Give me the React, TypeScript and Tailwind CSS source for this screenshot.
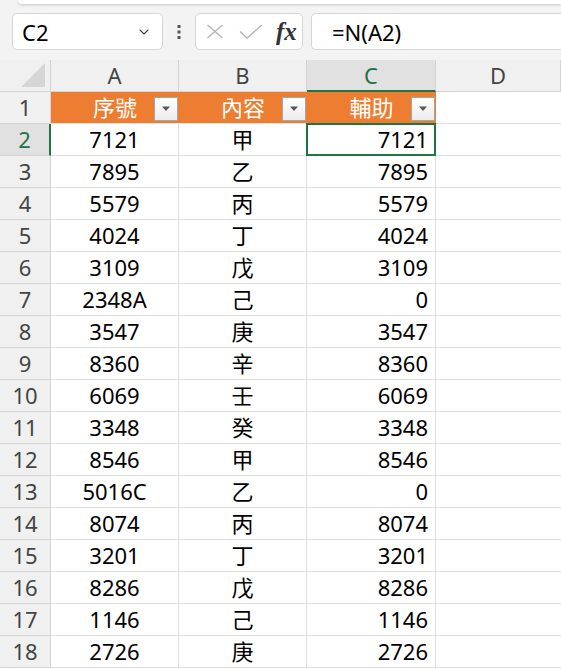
import React from 'react';
import { ChevronDown } from 'lucide-react';

const rows: [string, string, string][] = [
  ['7121', '甲', '7121'],
  ['7895', '乙', '7895'],
  ['5579', '丙', '5579'],
  ['4024', '丁', '4024'],
  ['3109', '戊', '3109'],
  ['2348A', '己', '0'],
  ['3547', '庚', '3547'],
  ['8360', '辛', '8360'],
  ['6069', '壬', '6069'],
  ['3348', '癸', '3348'],
  ['8546', '甲', '8546'],
  ['5016C', '乙', '0'],
  ['8074', '丙', '8074'],
  ['3201', '丁', '3201'],
  ['8286', '戊', '8286'],
  ['1146', '己', '1146'],
  ['2726', '庚', '2726'],
];

const font = { fontFamily: '"Noto Sans", "Noto Sans CJK TC", sans-serif' };

const FilterButton = () => (
  <div className="absolute right-[1px] top-[5px] w-[24px] h-[24px] bg-gradient-to-b from-white to-[#ececec] border border-[#a6a6a6] flex items-center justify-center">
    <svg width="10" height="6" viewBox="0 0 10 6">
      <path d="M1 0.5 L9 0.5 L5 5 Z" fill="#595959" />
    </svg>
  </div>
);

const FormulaBar = () => (
  <div className="h-[60px] bg-[#f3f3f3] relative">
    <div className="h-[4px] ml-[18px] bg-white rounded-bl-lg shadow-[0_1px_3px_rgba(0,0,0,0.18)]" />
    <div className="flex items-center mt-[9px] pl-[12px] h-[37px]">
      <div className="w-[151px] h-[37px] bg-white border border-[#d6d6d6] rounded-[5px] flex items-center justify-between pl-[9px] pr-[10px]">
        <span className="text-[22px] text-black leading-none">C2</span>
        <ChevronDown size={16} strokeWidth={1.6} className="text-[#444]" />
      </div>
      <div className="w-[32px] flex justify-center">
        <svg width="4" height="16" viewBox="0 0 4 16">
          <rect x="0.5" y="1" width="3" height="3" fill="#555" />
          <rect x="0.5" y="6.5" width="3" height="3" fill="#555" />
          <rect x="0.5" y="12" width="3" height="3" fill="#555" />
        </svg>
      </div>
      <div className="w-[108px] h-[37px] bg-white border border-[#d6d6d6] rounded-[5px] flex items-center pl-[10px]">
        <svg width="18" height="15" viewBox="0 0 18 15" className="mr-[15px]">
          <path d="M1.5 1 L16.5 14 M16.5 1 L1.5 14" stroke="#b5b5b5" strokeWidth="1.4" fill="none" />
        </svg>
        <svg width="24" height="15" viewBox="0 0 24 15" className="mr-[13px]">
          <path d="M1 7.5 L8 14 L23 1" stroke="#b5b5b5" strokeWidth="1.4" fill="none" />
        </svg>
        <span
          className="italic font-bold text-[25px] leading-none text-[#333]"
          style={{ fontFamily: '"Liberation Serif", serif' }}
        >
          fx
        </span>
      </div>
      <div className="flex-1 ml-[8px] h-[37px] bg-white border border-r-0 border-[#d6d6d6] rounded-l-[5px] flex items-center pl-[20px]">
        <span className="text-[22px] text-black leading-none">=N(A2)</span>
      </div>
    </div>
  </div>
);

export default function App() {
  const colHeaders = ['A', 'B', 'C', 'D'];
  return (
    <div className="w-[561px] h-[670px] overflow-hidden bg-white" style={font}>
      <FormulaBar />
      <div className="grid grid-cols-[51px_128px_128px_129px_1fr] auto-rows-[32px]">
        {/* column header row */}
        <div className="bg-[#f0f0f0] border-r border-b border-[#d4d4d4] relative">
          <svg width="24" height="24" viewBox="0 0 24 24" className="absolute right-[5px] bottom-[4px]">
            <path d="M24 0 L24 24 L0 24 Z" fill="#d6d6d6" />
          </svg>
        </div>
        {colHeaders.map((c) =>
          c === 'C' ? (
            <div
              key={c}
              className="bg-[#e1e1e1] border-r border-[#d4d4d4] border-b-2 border-b-[#217346] flex items-center justify-center text-[22px] text-[#217346]"
            >
              {c}
            </div>
          ) : (
            <div
              key={c}
              className="bg-[#f0f0f0] border-r border-b border-[#d4d4d4] flex items-center justify-center text-[22px] text-[#444]"
            >
              {c}
            </div>
          )
        )}

        {/* row 1: table header */}
        <div className="bg-[#f0f0f0] border-r border-b border-[#d4d4d4] flex items-center justify-center text-[22px] text-[#444]">
          1
        </div>
        {['序號', '內容', '輔助'].map((h) => (
          <div
            key={h}
            className="relative bg-[#ed7d31] border-b border-[#e1e1e1] flex items-center justify-center text-[22px] text-white"
          >
            {h}
            <FilterButton />
          </div>
        ))}
        <div className="border-b border-[#e1e1e1]" />

        {rows.map((r, i) => {
          const n = i + 2;
          const selected = n === 2;
          return (
            <React.Fragment key={n}>
              <div
                className={
                  selected
                    ? 'bg-[#e1e1e1] border-r-2 border-r-[#217346] border-b border-b-[#d4d4d4] flex items-center justify-center text-[22px] text-[#217346]'
                    : 'bg-[#f0f0f0] border-r border-b border-[#d4d4d4] flex items-center justify-center text-[22px] text-[#444]'
                }
              >
                {n}
              </div>
              <div className="border-r border-b border-[#e1e1e1] flex items-center justify-center text-[22px] text-black">
                {r[0]}
              </div>
              <div className="border-r border-b border-[#e1e1e1] flex items-center justify-center text-[22px] text-black">
                {r[1]}
              </div>
              <div className="relative border-r border-b border-[#e1e1e1] flex items-center justify-end pr-[7px] text-[22px] text-black">
                {r[2]}
                {selected && (
                  <div className="absolute -top-[1px] -left-[1px] -right-[1px] -bottom-[1px] border-2 border-[#217346]" />
                )}
              </div>
              <div className="border-b border-[#e1e1e1]" />
            </React.Fragment>
          );
        })}
      </div>
    </div>
  );
}
